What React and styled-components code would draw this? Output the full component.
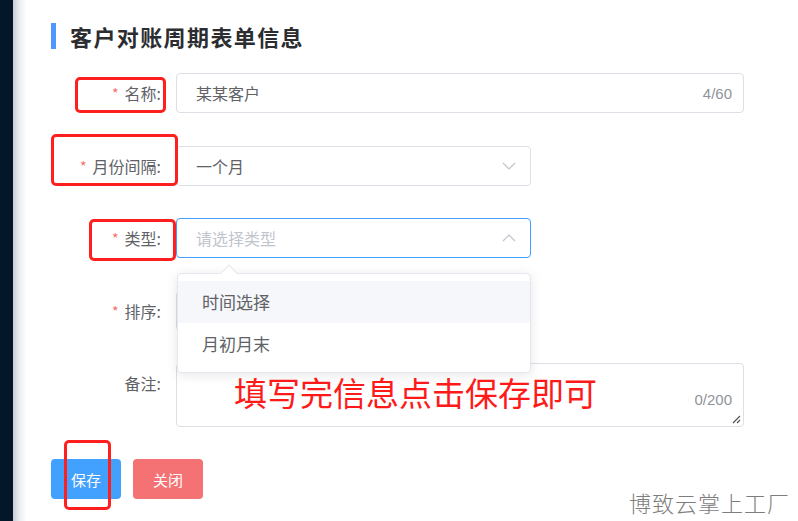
import React from "react";
import styled, { createGlobalStyle } from "styled-components";

const Global = createGlobalStyle`
  html, body { margin: 0; padding: 0; background: #fff; }
  body { font-family: "Liberation Sans", "Noto Sans CJK SC", sans-serif; }
  * { box-sizing: border-box; }
`;

const Page = styled.div`
  display: flex;
  width: 798px;
  height: 521px;
  overflow: hidden;
  background: #fff;
`;

const Sidebar = styled.div`
  width: 13px;
  flex: none;
  background: #03172b;
`;

const Shade = styled.div`
  width: 13px;
  flex: none;
  background: linear-gradient(to right, #c9cdd4, #eef0f3 55%, #fdfdfe);
`;

const Main = styled.div`
  position: relative;
  flex: 1;
  padding: 23px 0 0 25px;
`;

const TitleRow = styled.div`
  display: flex;
  align-items: center;
  height: 26px;
  gap: 14px;
`;

const Bar = styled.div`
  width: 5px;
  height: 26px;
  background: #4f98ff;
`;

const Title = styled.h2`
  margin: 0;
  font-family: "Noto Sans CJK SC", sans-serif;
  font-size: 22px;
  font-weight: 700;
  color: #2b2d30;
  line-height: 26px;
  letter-spacing: 1.4px;
`;

const Form = styled.div`
  display: grid;
  grid-template-columns: 125px auto;
  row-gap: 32.5px;
  margin-top: 24px;
  align-items: start;
`;

const Label = styled.label`
  display: flex;
  align-items: center;
  justify-content: flex-end;
  height: 40px;
  padding-right: 15px;
  font-size: 16px;
  line-height: 20px;
  color: #606266;
  font-family: "Noto Sans CJK SC", sans-serif;
  &::before {
    content: ${(p) => (p.$required ? '"*"' : '""')};
    color: #f56c6c;
    margin-right: 6px;
    font-size: 14px;
    line-height: 20px;
  }
`;

const Field = styled.div`
  position: relative;
  width: ${(p) => p.$w}px;
  height: ${(p) => p.$h || 40}px;
  border: 1px solid ${(p) => (p.$focus ? "#409eff" : "#dcdfe6")};
  border-radius: 4px;
  background: #fff;
  display: flex;
  align-items: center;
  padding: 0 19px;
  font-size: 16px;
  font-family: "Noto Sans CJK SC", sans-serif;
  color: ${(p) => (p.$placeholder ? "#c0c4cc" : "#606266")};
`;

const AreaField = styled(Field)`
  align-items: flex-start;
`;

const Count = styled.span`
  position: absolute;
  right: 11px;
  ${(p) => (p.$bottom ? `bottom: ${p.$bottom}px;` : "top: 50%; transform: translateY(-50%);")}
  font-family: "Liberation Sans", sans-serif;
  font-size: 15px;
  color: #909399;
`;

const Chevron = styled.svg`
  position: absolute;
  right: 14px;
  top: 50%;
  transform: translateY(-50%);
`;

const Resize = styled.svg`
  position: absolute;
  right: 2px;
  bottom: 2px;
`;

const Buttons = styled.div`
  display: flex;
  gap: 12px;
  margin-top: 32px;
`;

const Button = styled.button`
  width: 70px;
  height: 40px;
  border: none;
  border-radius: 4px;
  background: ${(p) => p.$bg};
  color: #fff;
  font-size: 15px;
  font-family: "Noto Sans CJK SC", sans-serif;
  padding: 0;
`;

const Dropdown = styled.div`
  position: absolute;
  left: 151px;
  top: 273px;
  width: 354px;
  height: 100px;
  padding-top: 7px;
  background: #fff;
  border: 1px solid #e4e7ed;
  border-radius: 4px;
  box-shadow: 0 2px 12px rgba(0, 0, 0, 0.1);
  z-index: 3;
`;

const Arrow = styled.div`
  position: absolute;
  left: 45px;
  top: -7px;
  width: 12px;
  height: 12px;
  background: #fff;
  border-left: 1px solid #e4e7ed;
  border-top: 1px solid #e4e7ed;
  transform: rotate(45deg);
`;

const Item = styled.div`
  position: relative;
  height: 42px;
  line-height: 42px;
  padding: 0 24px;
  font-size: 17px;
  font-family: "Noto Sans CJK SC", sans-serif;
  color: #606266;
  background: ${(p) => (p.$hover ? "#f5f7fa" : "transparent")};
`;

const Mark = styled.div`
  position: absolute;
  left: ${(p) => p.$x}px;
  top: ${(p) => p.$y}px;
  width: ${(p) => p.$w}px;
  height: ${(p) => p.$h}px;
  border: 3px solid #ff1f1f;
  border-radius: 5px;
  z-index: 5;
`;

const Note = styled.div`
  position: absolute;
  left: 208px;
  top: 374px;
  font-family: "Noto Sans CJK SC", sans-serif;
  font-size: 33px;
  line-height: 36px;
  color: #ff1a1a;
  white-space: nowrap;
  z-index: 4;
`;

const Watermark = styled.div`
  position: absolute;
  left: 603px;
  top: 486px;
  font-family: "Noto Sans CJK SC", sans-serif;
  font-weight: 300;
  font-size: 22px;
  color: #7d7d7d;
  white-space: nowrap;
  letter-spacing: 1px;
`;

const Down = () => (
  <Chevron width="14" height="8" viewBox="0 0 14 8">
    <path d="M1 1 L7 7 L13 1" fill="none" stroke="#c0c4cc" strokeWidth="1.2" />
  </Chevron>
);

const Up = () => (
  <Chevron width="14" height="8" viewBox="0 0 14 8">
    <path d="M1 7 L7 1 L13 7" fill="none" stroke="#c0c4cc" strokeWidth="1.2" />
  </Chevron>
);

export default function App() {
  return (
    <>
      <Global />
      <Page>
        <Sidebar />
        <Shade />
        <Main>
          <TitleRow>
            <Bar />
            <Title>客户对账周期表单信息</Title>
          </TitleRow>
          <Form>
            <Label $required>名称:</Label>
            <Field $w={568}>
              某某客户
              <Count>4/60</Count>
            </Field>

            <Label $required>月份间隔:</Label>
            <Field $w={355}>
              一个月
              <Down />
            </Field>

            <Label $required>类型:</Label>
            <Field $w={355} $focus $placeholder>
              请选择类型
              <Up />
            </Field>

            <Label $required>排序:</Label>
            <Field $w={355} />

            <Label>备注:</Label>
            <AreaField $w={568} $h={64}>
              <Count $bottom={18}>0/200</Count>
              <Resize width="10" height="10" viewBox="0 0 10 10">
                <path d="M2 9 L9 2 M6 9 L9 6" stroke="#555" strokeWidth="1.2" />
              </Resize>
            </AreaField>
          </Form>
          <Buttons>
            <Button $bg="#42a0ff">保存</Button>
            <Button $bg="#f47174">关闭</Button>
          </Buttons>

          <Dropdown>
            <Arrow />
            <Item $hover>时间选择</Item>
            <Item>月初月末</Item>
          </Dropdown>

          <Note>填写完信息点击保存即可</Note>

          <Mark $x={49} $y={77} $w={91} $h={36} />
          <Mark $x={25} $y={134} $w={127} $h={52} />
          <Mark $x={63} $y={219} $w={87} $h={42} />
          <Mark $x={38} $y={440} $w={47} $h={70} />

          <Watermark>博致云掌上工厂</Watermark>
        </Main>
      </Page>
    </>
  );
}
